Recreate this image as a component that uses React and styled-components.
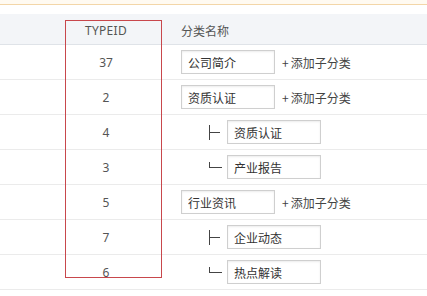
import styled, { createGlobalStyle } from 'styled-components';

const GlobalStyle = createGlobalStyle`
  * { box-sizing: border-box; }
  body {
    margin: 0;
    background: #fff;
    font-family: "Noto Sans", "Noto Sans CJK SC", sans-serif;
    font-size: 12px;
    color: #555;
  }
`;

const rows = [
  { id: 37, name: '公司简介' },
  { id: 2, name: '资质认证' },
  { id: 4, name: '资质认证', child: true },
  { id: 3, name: '产业报告', child: true, last: true },
  { id: 5, name: '行业资讯' },
  { id: 7, name: '企业动态', child: true },
  { id: 6, name: '热点解读', child: true, last: true },
];

const Page = styled.div`
  position: relative;
  width: 427px;
  height: 296px;
  overflow: hidden;
`;

const Notice = styled.div`
  height: 5px;
  background: #fffaf1;
  border-bottom: 1px solid #f3d6a8;
`;

const Table = styled.div`
  margin-top: 9px;
`;

const Row = styled.div`
  display: grid;
  grid-template-columns: 51px 110px 1fr;
  height: ${(p) => (p.$head ? '31px' : '35px')};
  align-items: center;
  background: ${(p) => (p.$head ? '#f3f5f8' : '#fff')};
  border-bottom: 1px solid ${(p) => (p.$head ? '#dfe3e8' : '#ebebeb')};
`;

const IdCell = styled.div`
  text-align: center;
  color: #555;
  font-size: 12px;
  padding-top: ${(p) => (p.$head ? '3px' : '0')};
  letter-spacing: ${(p) => (p.$head ? '0.3px' : '0')};
`;

const NameCell = styled.div`
  display: flex;
  align-items: center;
  padding-left: ${(p) => (p.$child ? '48px' : '20px')};
  padding-top: ${(p) => (p.$head ? '3px' : '0')};
  color: #555;
  font-family: "Noto Sans CJK SC", sans-serif;
`;

const TreeMark = styled.span`
  position: relative;
  flex: none;
  width: 14px;
  height: 24px;
  margin-right: 4px;
  &::before {
    content: '';
    position: absolute;
    left: 0;
    top: ${(p) => (p.$last ? '7px' : '5px')};
    height: ${(p) => (p.$last ? '6px' : '15px')};
    border-left: 1px solid #444;
  }
  &::after {
    content: '';
    position: absolute;
    left: 0;
    top: 12px;
    width: ${(p) => (p.$last ? '13px' : '11px')};
    border-top: 1px solid #444;
  }
`;

const NameInput = styled.input`
  width: 94px;
  height: 24px;
  padding: 0 6px;
  border: 1px solid #cfcfcf;
  box-shadow: inset 0 1px 2px rgba(0, 0, 0, 0.08);
  font-family: "Noto Sans CJK SC", sans-serif;
  font-size: 12px;
  color: #333;
  outline: none;
`;

const AddLink = styled.span`
  margin-left: 7px;
  color: #444;
  font-size: 12px;
`;

const Plus = styled.span`
  margin-right: 2px;
`;

const Highlight = styled.div`
  position: absolute;
  left: 65px;
  top: 20px;
  width: 97px;
  height: 258px;
  border: 1px solid #c8474c;
  pointer-events: none;
`;

export default function App() {
  return (
    <Page>
      <GlobalStyle />
      <Notice />
      <Table>
        <Row $head>
          <div />
          <IdCell $head>TYPEID</IdCell>
          <NameCell $head>分类名称</NameCell>
        </Row>
        {rows.map((r) => (
          <Row key={r.id}>
            <div />
            <IdCell>{r.id}</IdCell>
            <NameCell $child={r.child}>
              {r.child && <TreeMark $last={r.last} />}
              <NameInput defaultValue={r.name} />
              {!r.child && (
                <AddLink>
                  <Plus>+</Plus>添加子分类
                </AddLink>
              )}
            </NameCell>
          </Row>
        ))}
      </Table>
      <Highlight />
    </Page>
  );
}
